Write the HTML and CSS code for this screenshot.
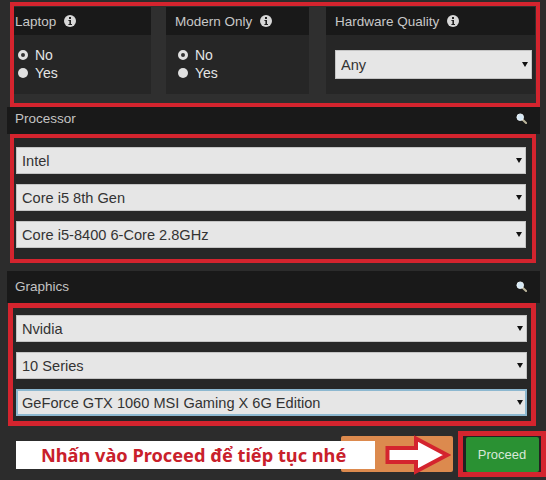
FILE: index.html
```html
<!DOCTYPE html>
<html lang="vi">
<head>
    <meta charset="UTF-8">
    <meta name="viewport" content="width=device-width, initial-scale=1.0">
    <title>Chọn cấu hình</title>
    <link rel="stylesheet" href="styles.css">
</head>
<body>
    <div class="main">
        <div class="red-box top-box">
            <div class="panel laptop">
                <div class="panel-head">Laptop
                    <svg class="info" viewBox="0 0 12 12"><circle cx="6" cy="6" r="6" fill="#d8d8d8"/><rect x="5" y="2" width="2" height="2" fill="#222"/><path d="M4.4 5h2.6v4h1v1H4.4V9h1V6h-1z" fill="#222"/></svg>
                </div>
                <div class="panel-body">
                    <label class="radio"><input type="radio" name="laptop" checked>No</label>
                    <label class="radio"><input type="radio" name="laptop">Yes</label>
                </div>
            </div>
            <div class="panel modern">
                <div class="panel-head">Modern Only
                    <svg class="info" viewBox="0 0 12 12"><circle cx="6" cy="6" r="6" fill="#d8d8d8"/><rect x="5" y="2" width="2" height="2" fill="#222"/><path d="M4.4 5h2.6v4h1v1H4.4V9h1V6h-1z" fill="#222"/></svg>
                </div>
                <div class="panel-body">
                    <label class="radio"><input type="radio" name="modern" checked>No</label>
                    <label class="radio"><input type="radio" name="modern">Yes</label>
                </div>
            </div>
            <div class="panel quality">
                <div class="panel-head">Hardware Quality
                    <svg class="info" viewBox="0 0 12 12"><circle cx="6" cy="6" r="6" fill="#d8d8d8"/><rect x="5" y="2" width="2" height="2" fill="#222"/><path d="M4.4 5h2.6v4h1v1H4.4V9h1V6h-1z" fill="#222"/></svg>
                </div>
                <div class="panel-body">
                    <div class="select-wrap quality-select"><select><option>Any</option></select></div>
                </div>
            </div>
        </div>

        <div class="section-head">Processor
            <svg class="search" viewBox="0 0 12 12"><path d="M7 7l4 4" stroke="#b9b39a" stroke-width="2.2" stroke-linecap="round"/><circle cx="4.6" cy="4.6" r="3.6" fill="#d5e8f5" stroke="#eef5fa"/></svg>
        </div>
        <div class="red-box select-box processor-box">
            <div class="select-wrap"><select><option>Intel</option></select></div>
            <div class="select-wrap"><select><option>Core i5 8th Gen</option></select></div>
            <div class="select-wrap"><select><option>Core i5-8400 6-Core 2.8GHz</option></select></div>
        </div>

        <div class="section-head graphics-head">Graphics
            <svg class="search" viewBox="0 0 12 12"><path d="M7 7l4 4" stroke="#b9b39a" stroke-width="2.2" stroke-linecap="round"/><circle cx="4.6" cy="4.6" r="3.6" fill="#d5e8f5" stroke="#eef5fa"/></svg>
        </div>
        <div class="red-box select-box graphics-box">
            <div class="select-wrap"><select><option>Nvidia</option></select></div>
            <div class="select-wrap"><select><option>10 Series</option></select></div>
            <div class="select-wrap focused"><select><option>GeForce GTX 1060 MSI Gaming X 6G Edition</option></select></div>
        </div>
    </div>

    <div class="footer">
        <button class="btn-back"></button>
        <div class="proceed-box">
            <button class="btn-proceed">Proceed</button>
        </div>
    </div>

    <div class="callout">Nhấn vào Proceed để tiếp tục nhé</div>
    <svg class="callout-arrow" viewBox="0 0 66 40"><polygon points="2.5,13 31,13 31,3.5 62,20 31,36.5 31,27 2.5,27" fill="#fff" stroke="#d4242e" stroke-width="4"/></svg>
</body>
</html>
```

FILE: styles.css
```css
body {
    position: relative;
    width: 546px;
    height: 480px;
    margin: 0;
    overflow: hidden;
    background-color: #2c2c2c;
    font-family: "Liberation Sans", Arial, sans-serif;
    font-size: 14px;
    color: #d4d4d4;
}
.main {
    width: 533px;
    margin-left: 7px;
}
.red-box {
    box-sizing: border-box;
    border: 4px solid #d4242e;
    background-color: #272727;
}
.top-box {
    display: flex;
    width: 530px;
    height: 105px;
    margin: 2px 0 0 3px;
    padding-top: 1px;
    background-color: #2f2f2f;
}
.panel {
    height: 87px;
    background-color: #262626;
}
.laptop {
    width: 137px;
    margin-right: 15px;
}
.modern {
    width: 143px;
    margin-right: 17px;
}
.quality {
    width: 209px;
}
.panel-head {
    display: flex;
    align-items: center;
    gap: 8px;
    height: 28px;
    padding-left: 9px;
    background-color: #191919;
    font-size: 13.5px;
    color: #c8c8c8;
}
.laptop .panel-head {
    padding-left: 1px;
}
.info {
    width: 12px;
    height: 12px;
}
.panel-body {
    padding: 11px 0 0 12px;
}
.laptop .panel-body {
    padding-left: 4px;
}
.quality .panel-body {
    padding: 15px 3px 0 9px;
}
.radio {
    display: flex;
    align-items: center;
    gap: 7px;
    height: 18px;
    color: #e4e4e4;
}
.radio input {
    appearance: none;
    box-sizing: border-box;
    width: 10px;
    height: 10px;
    margin: 0;
    border-radius: 50%;
    background-color: #e0e0e0;
}
.radio input:checked {
    border: 3px solid #e0e0e0;
    background-color: #333;
}
.section-head {
    display: flex;
    align-items: center;
    justify-content: space-between;
    box-sizing: border-box;
    height: 27px;
    padding: 0 13px 4px 8px;
    background-color: #191919;
    font-size: 13.5px;
    color: #c4c4c4;
}
.graphics-head {
    height: 32px;
    margin-top: 8px;
    padding-bottom: 2px;
}
.search {
    width: 11px;
    height: 11px;
}
.select-box {
    display: flex;
    flex-direction: column;
    gap: 10px;
}
.processor-box {
    width: 526px;
    height: 129px;
    margin-left: 3px;
    padding: 9px 6px 0 2px;
}
.graphics-box {
    width: 528px;
    height: 123px;
    margin-left: 1px;
    padding: 7px 4px 0 3px;
    border-width: 5px;
}
.select-wrap {
    position: relative;
    height: 27px;
}
.select-wrap::after {
    content: "";
    position: absolute;
    right: 4px;
    top: 11px;
    border-top: 5px solid #111;
    border-left: 3px solid transparent;
    border-right: 3px solid transparent;
}
.select-wrap select {
    appearance: none;
    box-sizing: border-box;
    display: block;
    width: 100%;
    height: 100%;
    padding: 0 0 0 5px;
    border: 1px solid #c4c4c4;
    border-radius: 0;
    background-color: #e6e6e6;
    font-family: inherit;
    font-size: 14.6px;
    color: #333;
}
.quality-select {
    height: 29px;
}
.quality-select::after {
    top: 12px;
}
.focused select {
    border: 2px solid #8db8d0;
    padding-left: 4px;
}
.footer {
    display: flex;
    align-items: center;
    justify-content: flex-end;
    gap: 5px;
    margin-top: 5px;
}
.btn-back {
    width: 112px;
    height: 36px;
    border: none;
    border-radius: 2px;
    background-color: #dc8a4e;
}
.proceed-box {
    box-sizing: border-box;
    display: flex;
    align-items: center;
    justify-content: center;
    width: 88px;
    height: 46px;
    border: 5px solid #d4242e;
    background-color: #222;
}
.btn-proceed {
    width: 73px;
    height: 35px;
    border: none;
    border-radius: 2px;
    background-color: #2a9133;
    font-family: inherit;
    font-size: 13px;
    color: #d8e8d8;
}
.callout {
    position: absolute;
    left: 16px;
    top: 441px;
    box-sizing: border-box;
    width: 359px;
    height: 28px;
    padding-left: 25px;
    background-color: #fff;
    font-family: "Noto Sans", sans-serif;
    font-size: 18.2px;
    font-weight: bold;
    line-height: 28px;
    color: #c9202b;
}
.callout-arrow {
    position: absolute;
    left: 385px;
    top: 435px;
    width: 66px;
    height: 40px;
}
```
